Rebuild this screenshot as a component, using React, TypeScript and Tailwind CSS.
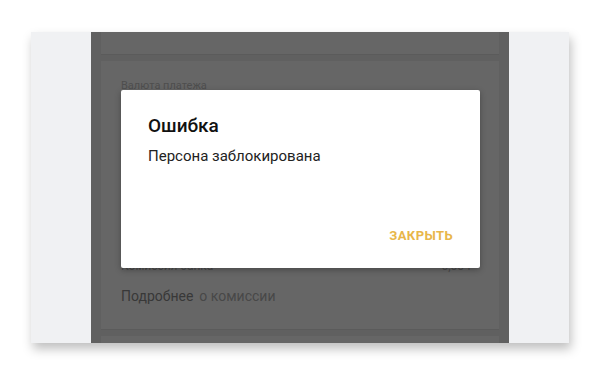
export default function App() {
  return (
    <div
      className="w-[600px] h-[375px] bg-white pt-[32px] pl-[31px]"
      style={{ fontFamily: "Roboto, 'Noto Sans', sans-serif" }}
    >
      {/* Screenshot frame */}
      <div className="w-[538px] h-[311px] flex bg-[#f0f1f3] shadow-[2px_6px_10px_rgba(0,0,0,0.25)]">
        <div className="w-[60px]" />

        {/* Phone screen under dimmed overlay */}
        <div className="relative w-[418px] h-full bg-[#606060] overflow-hidden flex flex-col gap-[6px] px-[10px]">
          <div className="h-[23px] bg-[#666666] border-b border-[#5b5b5b]" />

          <div className="h-[269px] bg-[#666666] border-b border-[#5b5b5b] px-[20px] pt-[18px] flex flex-col">
            <span className="text-[11px] text-[#4e4e4e] leading-[14px]">Валюта платежа</span>
            <div className="mt-[166px] flex justify-between text-[12px] text-[#4a4a4a] leading-[14px]">
              <span>Комиссия банка</span>
              <span className="pr-[4px]">0,00 ₽</span>
            </div>
            <div className="mt-[15px] flex gap-[6px] text-[14px] leading-[17px]">
              <span className="text-[#383838]">Подробнее</span>
              <span className="text-[#484848]">о комиссии</span>
            </div>
          </div>

          <div className="flex-1 bg-[#666666]" />

          {/* Dialog */}
          <div className="absolute left-[30px] top-[58px] w-[359px] h-[178px] bg-white rounded-[2px] shadow-[0_2px_6px_rgba(0,0,0,0.3)] flex flex-col px-[27px] pt-[23px]">
            <h2 className="text-[19px] font-medium text-[#111] leading-[25px]">Ошибка</h2>
            <p className="mt-[9px] text-[15px] text-[#222] leading-[19px]">Персона заблокирована</p>
            <div className="mt-auto mb-[23px] flex justify-end">
              <span className="text-[13px] font-bold text-[#e8b64a] tracking-[0.4px]">ЗАКРЫТЬ</span>
            </div>
          </div>
        </div>

        <div className="w-[60px]" />
      </div>
    </div>
  );
}
